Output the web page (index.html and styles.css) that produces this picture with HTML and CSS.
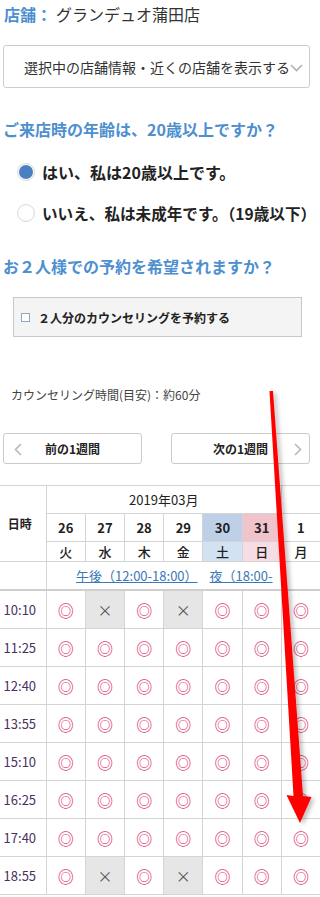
FILE: index.html
```html
<!DOCTYPE html>
<html lang="ja">
	<head>
		<meta charset="UTF-8">
		<meta name="viewport" content="width=device-width, initial-scale=1.0">
		<title>カウンセリング予約</title>
		<link rel="stylesheet" href="styles.css">
	</head>
	<body>

		<div class="page">

			<div class="store"><span class="store-label">店舗：</span><span class="store-name">グランデュオ蒲田店</span></div>

			<div class="select">
				<span>選択中の店舗情報・近くの店舗を表示する</span>
				<svg class="select-arrow" width="13" height="8" viewBox="0 0 13 8"><polyline points="1,1 6.5,6.5 12,1" fill="none" stroke="#b0b0b0" stroke-width="1.6"/></svg>
			</div>

			<h2 class="question q-age">ご来店時の年齢は、20歳以上ですか？</h2>
			<div class="radio-row r-first"><span class="radio checked"></span>はい、私は20歳以上です。</div>
			<div class="radio-row r-second"><span class="radio"></span>いいえ、私は未成年です。（19歳以下）</div>

			<h2 class="question q-pair">お２人様での予約を希望されますか？</h2>
			<div class="pair-box"><span class="check"></span>２人分のカウンセリングを予約する</div>

			<p class="duration">カウンセリング時間(目安)：約60分</p>

			<div class="week-nav">
				<button class="week-btn">
					<svg class="chev chev-left" width="8" height="13" viewBox="0 0 8 13"><polyline points="7,1 1.5,6.5 7,12" fill="none" stroke="#b8b8b8" stroke-width="1.6"/></svg>
					前の1週間
				</button>
				<button class="week-btn">
					次の1週間
					<svg class="chev chev-right" width="8" height="13" viewBox="0 0 8 13"><polyline points="1,1 6.5,6.5 1,12" fill="none" stroke="#b8b8b8" stroke-width="1.6"/></svg>
				</button>
			</div>

		</div>

		<div class="calendar">
			<table class="cal">
				<colgroup>
					<col class="c-time">
					<col class="c-day"><col class="c-day"><col class="c-day"><col class="c-day"><col class="c-day"><col class="c-day"><col class="c-day">
				</colgroup>
				<tr class="row-month">
					<th rowspan="3" class="head-time">日時</th>
					<th colspan="6" class="month">2019年03月</th>
					<th></th>
				</tr>
				<tr class="row-date">
					<th>26</th><th>27</th><th>28</th><th>29</th><th class="sat">30</th><th class="sun">31</th><th>1</th>
				</tr>
				<tr class="row-week">
					<td>火</td><td>水</td><td>木</td><td>金</td><td class="sat-light">土</td><td class="sun-light">日</td><td>月</td>
				</tr>
				<tr class="row-links">
					<td></td>
					<td colspan="7"><div class="links"><a href="#">午後（12:00-18:00）</a><a href="#" class="cut">夜（18:00-</a></div></td>
				</tr>
				<tr class="slot first-slot">
					<td class="time">10:10</td><td class="ok">◎</td><td class="ng">×</td><td class="ok">◎</td><td class="ng">×</td><td class="ok">◎</td><td class="ok">◎</td><td class="ok">◎</td>
				</tr>
				<tr class="slot">
					<td class="time">11:25</td><td class="ok">◎</td><td class="ok">◎</td><td class="ok">◎</td><td class="ok">◎</td><td class="ok">◎</td><td class="ok">◎</td><td class="ok">◎</td>
				</tr>
				<tr class="slot">
					<td class="time">12:40</td><td class="ok">◎</td><td class="ok">◎</td><td class="ok">◎</td><td class="ok">◎</td><td class="ok">◎</td><td class="ok">◎</td><td class="ok">◎</td>
				</tr>
				<tr class="slot">
					<td class="time">13:55</td><td class="ok">◎</td><td class="ok">◎</td><td class="ok">◎</td><td class="ok">◎</td><td class="ok">◎</td><td class="ok">◎</td><td class="ok">◎</td>
				</tr>
				<tr class="slot">
					<td class="time">15:10</td><td class="ok">◎</td><td class="ok">◎</td><td class="ok">◎</td><td class="ok">◎</td><td class="ok">◎</td><td class="ok">◎</td><td class="ok">◎</td>
				</tr>
				<tr class="slot">
					<td class="time">16:25</td><td class="ok">◎</td><td class="ok">◎</td><td class="ok">◎</td><td class="ok">◎</td><td class="ok">◎</td><td class="ok">◎</td><td class="ok">◎</td>
				</tr>
				<tr class="slot">
					<td class="time">17:40</td><td class="ok">◎</td><td class="ok">◎</td><td class="ok">◎</td><td class="ok">◎</td><td class="ok">◎</td><td class="ok">◎</td><td class="ok">◎</td>
				</tr>
				<tr class="slot">
					<td class="time">18:55</td><td class="ok">◎</td><td class="ng">×</td><td class="ok">◎</td><td class="ng">×</td><td class="ok">◎</td><td class="ok">◎</td><td class="ok">◎</td>
				</tr>
			</table>
		</div>

		<!-- red arrow drawn on top of the screenshot -->
		<svg class="annotation" width="320" height="897" viewBox="0 0 320 897">
			<defs>
				<filter id="shade" x="-50%" y="-5%" width="200%" height="110%">
					<feDropShadow dx="3" dy="2" stdDeviation="2" flood-color="#000" flood-opacity="0.25"/>
				</filter>
			</defs>
			<polygon points="269.5,391 273,391 303,796 311.5,797 300,823 286.5,795 293.5,796" fill="#ff0000" filter="url(#shade)"/>
		</svg>

	</body>
</html>
```

FILE: styles.css
```css
body {
	margin: 0;
	position: relative;
	overflow-x: hidden;
	font-family: "Noto Sans CJK JP", "Noto Sans", sans-serif;
	color: #333;
	background-color: #fff;
}
.page {
	padding: 0 10px 0 3px;
	width: 307px;
}
.store {
	height: 28px;
	line-height: 28px;
	font-size: 16px;
	padding-left: 1px;
	white-space: nowrap;
}
.store-label {
	color: #4d8fcf;
	font-weight: bold;
	margin-right: 4px;
}
.select {
	margin-top: 17px;
	height: 43px;
	box-sizing: border-box;
	border: 1px solid #cdcdcd;
	border-radius: 3px;
	display: flex;
	align-items: center;
	padding-left: 20px;
	font-size: 14px;
	white-space: nowrap;
}
.select-arrow {
	margin-left: 0;
	margin-top: 2px;
}
.question {
	margin: 0;
	font-size: 16px;
	line-height: 24px;
	color: #4d8fcf;
	font-weight: bold;
	white-space: nowrap;
}
.q-age {
	margin-top: 29px;
}
.q-pair {
	margin-top: 29px;
}
.radio-row {
	display: flex;
	align-items: center;
	height: 24px;
	padding-left: 14px;
	font-size: 16px;
	font-weight: bold;
	white-space: nowrap;
	color: #222;
}
.r-first {
	margin-top: 19px;
}
.r-second {
	margin-top: 17px;
	font-size: 15.6px;
}
.radio {
	flex: none;
	width: 18px;
	height: 18px;
	box-sizing: border-box;
	border: 1px solid #d8d8d8;
	border-radius: 50%;
	margin-right: 7px;
	display: flex;
	align-items: center;
	justify-content: center;
	background-color: #fff;
}
.radio.checked::after {
	content: "";
	width: 14px;
	height: 14px;
	border-radius: 50%;
	background-color: #4a7fc0;
}
.pair-box {
	margin: 19px 8px 0 10px;
	height: 40px;
	box-sizing: border-box;
	border: 1px solid #c8c8c8;
	background-color: #f4f4f4;
	display: flex;
	align-items: center;
	padding-left: 7px;
	font-size: 12px;
	font-weight: bold;
	color: #222;
}
.check {
	width: 9px;
	height: 9px;
	box-sizing: border-box;
	border: 1px solid #8fa6c6;
	background-color: #fff;
	margin-right: 8px;
}
.duration {
	margin: 49px 0 0 8px;
	font-size: 12px;
	line-height: 18px;
	color: #444;
}
.week-nav {
	margin-top: 29px;
	display: flex;
	justify-content: space-between;
}
.week-btn {
	position: relative;
	width: 139px;
	height: 31px;
	box-sizing: border-box;
	border: 1px solid #cbcbcb;
	border-radius: 3px;
	background-color: #fff;
	font-family: inherit;
	font-size: 12px;
	font-weight: bold;
	color: #222;
	padding: 0;
}
.chev {
	position: absolute;
	top: 9px;
}
.chev-left {
	left: 10px;
}
.chev-right {
	right: 7px;
}
.calendar {
	margin-top: 21px;
	width: 320px;
	overflow: hidden;
}
.cal {
	border-collapse: collapse;
	table-layout: fixed;
	width: 321px;
	font-size: 13px;
}
.c-time {
	width: 46px;
}
.c-day {
	width: 39px;
}
.cal th,
.cal td {
	border: 1px solid #d4d4d4;
	padding: 0;
	text-align: center;
	color: #222;
}
.cal tr > :first-child {
	border-left: none;
}
.row-month th {
	height: 27px;
	font-weight: normal;
}
.head-time {
	font-size: 12px;
	font-weight: bold !important;
	padding-right: 6px !important;
}
.row-date th {
	height: 27px;
	font-weight: bold;
}
.row-week td {
	height: 19px;
	font-weight: 500;
}
.sat {
	background-color: #bed0e8;
}
.sun {
	background-color: #f1c3cb;
}
.sat-light {
	background-color: #d3e2f2;
}
.sun-light {
	background-color: #f7dce4;
}
.row-links td {
	height: 27px;
	border-bottom: 2px solid #cfcfcf;
}
.links {
	display: flex;
	justify-content: center;
	gap: 12px;
	white-space: nowrap;
	padding-right: 10px;
}
.links a {
	color: #3a78b8;
	font-size: 13px;
}
.links .cut {
	padding-right: 8px;
}
.slot td {
	height: 37px;
}
.time {
	padding-right: 6px !important;
	color: #4a2f63 !important;
}
.ok {
	color: #dc3d72 !important;
	font-size: 16px;
	font-weight: bold;
}
.ng {
	background-color: #e6e6e6;
	color: #555 !important;
	font-size: 15px;
}
.annotation {
	position: absolute;
	left: 0;
	top: 0;
	pointer-events: none;
}
```
